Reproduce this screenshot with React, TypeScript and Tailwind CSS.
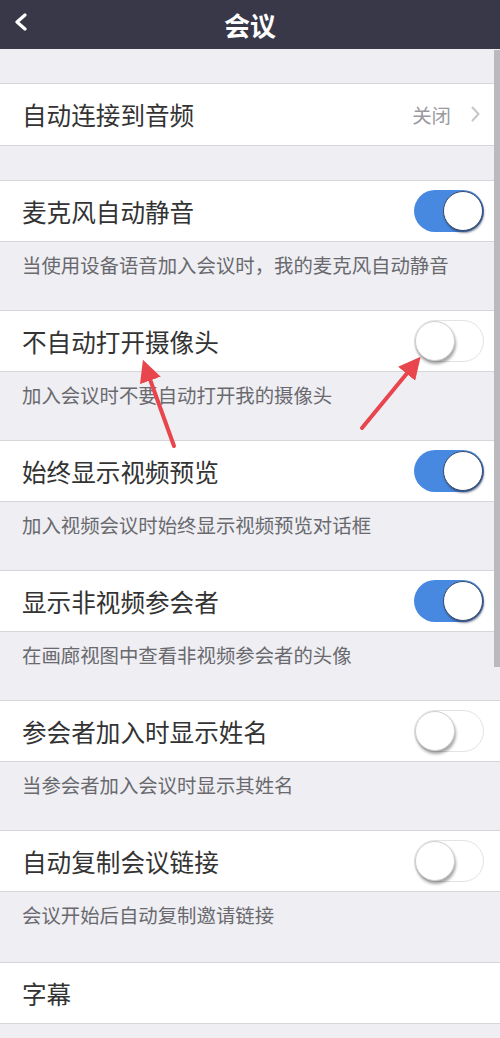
import React from "react";

type Item = {
  title: string;
  desc: string;
  on: boolean;
};

const items: Item[] = [
  { title: "麦克风自动静音", desc: "当使用设备语音加入会议时，我的麦克风自动静音", on: true },
  { title: "不自动打开摄像头", desc: "加入会议时不要自动打开我的摄像头", on: false },
  { title: "始终显示视频预览", desc: "加入视频会议时始终显示视频预览对话框", on: true },
  { title: "显示非视频参会者", desc: "在画廊视图中查看非视频参会者的头像", on: true },
  { title: "参会者加入时显示姓名", desc: "当参会者加入会议时显示其姓名", on: false },
  { title: "自动复制会议链接", desc: "会议开始后自动复制邀请链接", on: false },
];

const font = { fontFamily: '"Noto Sans CJK SC", "Noto Sans", sans-serif' };

function Toggle({ on }: { on: boolean }) {
  if (on) {
    return (
      <div className="flex h-[42px] w-[70px] items-center justify-end rounded-full bg-[#4789e0] p-[1px]">
        <div className="h-[40px] w-[40px] rounded-full border-[1.5px] border-[#3d4a66] bg-white shadow-[1px_2px_2px_rgba(30,40,70,0.5)]" />
      </div>
    );
  }
  return (
    <div className="flex h-[42px] w-[70px] items-center justify-start rounded-full border border-[#e3e3e6] bg-white">
      <div className="h-[40px] w-[40px] rounded-full border border-[#cfcfd3] bg-white shadow-[1px_3px_3px_rgba(0,0,0,0.35)]" />
    </div>
  );
}

function Row({ title, right }: { title: string; right?: React.ReactNode }) {
  return (
    <div className="flex h-[62px] items-center justify-between border-y border-[#d6d6da] bg-white pl-[22px] pr-[16px]">
      <span className="text-[24.6px] leading-none text-[#333333]">{title}</span>
      {right}
    </div>
  );
}

function Desc({ text }: { text: string }) {
  return (
    <div className="h-[68px] px-[22px] pt-[11px] text-[19.4px] leading-[24px] text-[#69696e]">
      {text}
    </div>
  );
}

export default function App() {
  return (
    <div className="relative h-[1038px] w-[500px] overflow-hidden bg-[#eeeef3]" style={font}>
      <header className="relative flex h-[49px] items-center justify-center bg-[#393849]">
        <svg className="absolute left-[13px] top-[13px]" width="16" height="18" viewBox="0 0 16 18">
          <polyline points="12,2 4,9 12,16" fill="none" stroke="white" strokeWidth="3.2" strokeLinecap="round" strokeLinejoin="round" />
        </svg>
        <h1 className="text-[26px] font-bold text-white">会议</h1>
      </header>

      <div className="h-[34px]" />
      <div className="flex h-[63px] items-center justify-between border-y border-[#d6d6da] bg-white pl-[22px] pr-[20px]">
        <span className="text-[24.6px] leading-none text-[#333333]">自动连接到音频</span>
        <div className="flex items-center gap-[20px]">
          <span className="text-[19.4px] text-[#9a9a9e]">关闭</span>
          <svg width="9" height="16" viewBox="0 0 9 16">
            <polyline points="1.5,1.5 7.5,8 1.5,14.5" fill="none" stroke="#c5c5ca" strokeWidth="2" strokeLinecap="round" strokeLinejoin="round" />
          </svg>
        </div>
      </div>
      <div className="h-[34px]" />

      {items.map((it) => (
        <div key={it.title}>
          <Row title={it.title} right={<Toggle on={it.on} />} />
          <Desc text={it.desc} />
        </div>
      ))}

      <div className="h-[2px]" />
      <Row title="字幕" />
      <Desc text="当主持人启用字幕时显示会议字幕" />

      <div className="absolute right-0 top-[50px] h-[617px] w-[6px] bg-[#b9b9be]" />

      <svg className="pointer-events-none absolute left-0 top-0" width="500" height="1038">
        <defs>
          <marker id="ah" markerWidth="5.5" markerHeight="5.5" refX="2.5" refY="2.75" orient="auto">
            <path d="M0,0 L5.5,2.75 L0,5.5 Z" fill="#e8454c" />
          </marker>
        </defs>
        <line x1="174" y1="446" x2="147" y2="371" stroke="#e8454c" strokeWidth="4" strokeLinecap="round" markerEnd="url(#ah)" />
        <line x1="362" y1="428" x2="413" y2="366" stroke="#e8454c" strokeWidth="4" strokeLinecap="round" markerEnd="url(#ah)" />
      </svg>
    </div>
  );
}
